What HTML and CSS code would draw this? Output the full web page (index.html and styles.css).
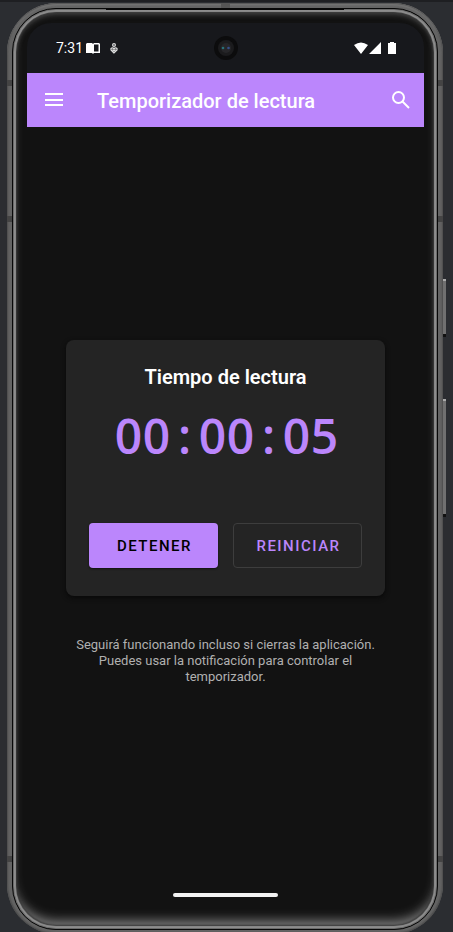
FILE: index.html
```html
<!DOCTYPE html>
<html lang="es">
<head>
<meta charset="utf-8">
<meta name="viewport" content="width=device-width, initial-scale=1">
<title>Temporizador de lectura</title>
<link rel="stylesheet" href="styles.css">
</head>
<body>
<div class="phone">
  <span class="key key-power"></span>
  <span class="key key-volume"></span>
  <span class="band band-left band-high"></span>
  <span class="band band-left band-mid"></span>
  <span class="band band-left band-low"></span>
  <span class="band band-right band-high"></span>
  <span class="band band-right band-mid"></span>
  <span class="band band-right band-low"></span>
  <span class="band-top"></span>
  <div class="bezel">
    <span class="speaker"></span>
    <div class="screen">
      <div class="status">
        <div class="status-group">
          <span class="clock">7:31</span>
          <svg class="book" width="14" height="12" viewBox="0 0 14 12"><path d="M1 1h5l1 1 1-1h5l1 1v9H8l-1 1-1-1H0V2z" fill="#fff"/><path d="M8 2.500h4.500v7H8z" fill="#17181c"/></svg>
          <svg width="8" height="11" viewBox="0 0 8 11" fill="none" stroke="#ddd" stroke-width="1.200"><circle cx="4" cy="2" r="1.400"/><path d="M4 10L1 7V5.500Q2.500 4 4 5.800 5.500 4 7 5.500V7zM2.500 6.500L4 8l1.500-1.500"/></svg>
        </div>
        <svg class="camera" width="26" height="26" viewBox="0 0 26 26"><circle cx="13" cy="13" r="12" fill="#0c0c0d"/><circle cx="13" cy="13" r="8" fill="#1b1b1d"/><circle cx="13" cy="13" r="5" fill="#262629"/><circle cx="10" cy="13" r="1.300" fill="#287078"/><circle cx="15.500" cy="13" r="1.300" fill="#354e88"/></svg>
        <div class="status-group status-end">
          <svg width="42" height="12" viewBox="0 0 42 12" fill="#fff"><path d="M0 3Q7-2 14 3L7 12zM27 0v12H15zM36 0h4v1h2v11h-8V1h2z"/></svg>
        </div>
      </div>
      <header class="appbar">
        <button class="icon-button" type="button" aria-label="Menú"><svg width="18" height="14" viewBox="0 0 18 14"><path d="M0 1h18M0 7h18M0 12h18" stroke="#fff" stroke-width="2"/></svg></button>
        <h1>Temporizador de lectura</h1>
        <button class="icon-button" type="button" aria-label="Buscar"><svg width="18" height="18" viewBox="0 0 18 18" fill="none" stroke="#fff" stroke-width="2"><circle cx="6.500" cy="6.500" r="5.500"/><path d="M10.500 10.500L17 17"/></svg></button>
      </header>
      <main>
        <section class="card">
          <h2>Tiempo de lectura</h2>
          <div class="timer" role="timer"><span>0</span><span>0</span><span>:</span><span>0</span><span>0</span><span>:</span><span>0</span><span>5</span></div>
          <div class="actions">
            <button class="button primary" type="button">DETENER</button>
            <button class="button outlined" type="button">REINICIAR</button>
          </div>
        </section>
        <p class="note">Seguirá funcionando incluso si cierras la aplicación. Puedes usar la notificación para controlar el temporizador.</p>
      </main>
      <div class="home"></div>
    </div>
  </div>
</div>
</body>
</html>
```
FILE: styles.css
```css
* { box-sizing: border-box; }

body {
  margin: 0;
  height: 100vh;
  overflow: hidden;
  background: #2b2d31;
  border-top: 2px solid #1e1f22;
  font-family: Roboto, "Liberation Sans", sans-serif;
  color: #fff;
}

h1, h2, p { margin: 0; }
button { font-family: inherit; cursor: pointer; }
svg { display: block; }

.phone {
  position: relative;
  display: flex;
  margin: 1px 10px 0 7px;
  min-height: calc(100vh - 1px);
  padding: 5px 5px 4px;
  border-radius: 50px;
  background: #646464;
  box-shadow: inset 0 0 2px 1px #484848, inset 0 2px 2px #8b8b8b;
}

.bezel {
  position: relative;
  flex: 1;
  display: flex;
  padding: 14px 13px 21px 14px;
  border: 1px solid #080808;
  border-radius: 44px;
  background: #121212;
  box-shadow: inset 0 0 1px 1px #666, inset 0 0 1px 3px #929292, inset 0 0 2px 4px #2c2c2c, inset 0 4px 6px #666, inset 0 -10px 12px -2px #858585;
}

.screen {
  flex: 1;
  display: flex;
  flex-direction: column;
  overflow: hidden;
  border-radius: 24px;
}

.speaker {
  position: absolute;
  top: -1px;
  left: 22%;
  right: 22%;
  height: 2px;
  background: #080808;
}

.key {
  position: absolute;
  right: -3px;
  width: 3px;
  background: #707070;
  border-top: 2px solid #aaa;
  border-bottom: 3px solid #111;
}
.key-power { top: 29.600%; height: 58px; }
.key-volume { top: 42.500%; height: 118px; }

.band {
  position: absolute;
  width: 6px;
  height: 6px;
  background: #444;
}
.band-left { left: 0; }
.band-right { right: 0; }
.band-high { top: 77px; }
.band-mid { top: 213px; }
.band-low { bottom: 72px; }
.band-top {
  position: absolute;
  top: 0;
  left: calc(50% - 4px);
  width: 9px;
  height: 5px;
  background: #555;
}

.status {
  display: grid;
  grid-template-columns: 1fr auto 1fr;
  align-items: center;
  height: 50px;
  padding: 0 28px 0 29px;
  background: #17181c;
}
.status-group { display: flex; align-items: center; }
.status-end { justify-content: flex-end; }
.clock { font-size: 14px; line-height: 16px; }
.book { margin: 0 10px 0 3px; }

.appbar {
  display: flex;
  align-items: center;
  height: 54px;
  padding: 0 9px 0 13px;
  background: #bb86fc;
}
.appbar h1 {
  flex: 1;
  padding: 2px 0 0 29px;
  font-size: 20px;
  line-height: 24px;
  font-weight: 500;
}
.icon-button {
  display: grid;
  place-items: center;
  width: 28px;
  height: 40px;
  padding: 0;
  border: 0;
  background: none;
}

main {
  flex: 1;
  display: flex;
  flex-direction: column;
  justify-content: center;
  padding: 4px 39px 0;
}

.card {
  padding: 24px 23px 28px;
  border-radius: 8px;
  background: #242424;
  box-shadow: 0 2px 5px #080808;
  text-align: center;
}
.card h2 {
  font-size: 20px;
  line-height: 26px;
  font-weight: 600;
}

.timer {
  display: grid;
  grid-template-columns: repeat(8, 28px);
  justify-content: center;
  margin: 6px 0 47px;
  padding-left: 2px;
  color: #bb86fc;
  font-family: "Open Sans", "Noto Sans", sans-serif;
  font-size: 48px;
  line-height: 80px;
  font-weight: 600;
}

.actions {
  display: grid;
  grid-template-columns: 1fr 1fr;
  gap: 15px;
}
.button {
  height: 45px;
  padding: 2px 0 0 2px;
  border: 1px solid transparent;
  border-radius: 4px;
  font-size: 15px;
  font-weight: 500;
  letter-spacing: 1.5px;
}
.primary {
  background: #bb86fc;
  color: #000;
  box-shadow: 0 1px 2px #111;
}
.outlined {
  background: none;
  border-color: #3d3d3d;
  color: #bb86fc;
}

.note {
  margin-top: 41px;
  color: #b0b0b0;
  font-size: 13px;
  line-height: 16px;
  text-align: center;
}

.home {
  align-self: center;
  width: 105px;
  height: 4px;
  margin-bottom: 11px;
  border-radius: 2px;
  background: #f2f2f2;
}
```
